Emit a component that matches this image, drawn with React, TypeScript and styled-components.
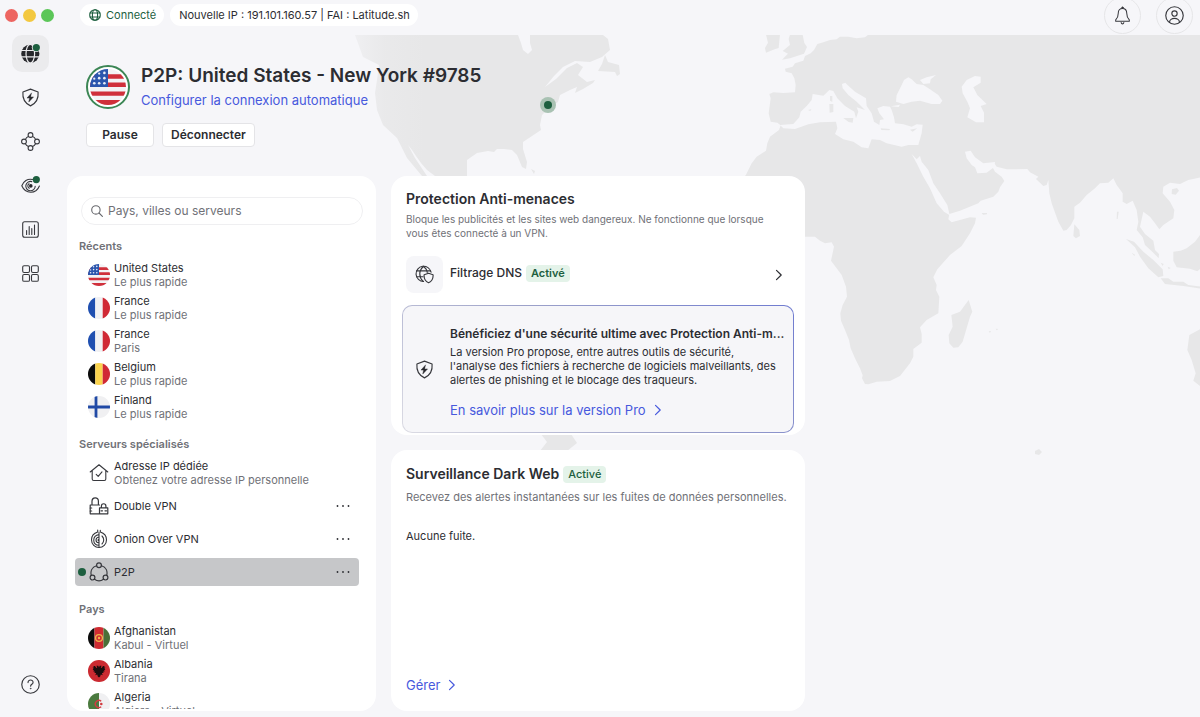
import React from "react";
import styled, { createGlobalStyle, css } from "styled-components";

const color = {
  page: "#f6f6f9",
  land: "#e7e7e8",
  ink: "#2c2d32",
  muted: "#707177",
  link: "#4759dd",
  green: "#1d5f3f",
  mint: "#e4f3e9",
};

const GlobalStyle = createGlobalStyle`
  *, *::before, *::after { box-sizing: border-box; }
  body {
    margin: 0;
    background: ${color.page};
    color: ${color.ink};
    font-family: Inter, "Liberation Sans", sans-serif;
    font-size: 11px;
    line-height: 14px;
  }
  h1, h2, h3, p, ul { margin: 0; padding: 0; }
  ul { list-style: none; }
  button, input { font: inherit; color: inherit; }
  button { border: 0; padding: 0; background: none; cursor: pointer; }
  a { color: ${color.link}; text-decoration: none; }
  svg { display: block; flex: none; }
`;

/* ---------- Shell ---------- */

const Shell = styled.div`
  display: flex;
  flex-direction: column;
  height: 100vh;
  overflow: hidden;
`;

const TitleBar = styled.header`
  display: flex;
  align-items: center;
  height: 30px;
  flex: none;
  padding: 0 7px 0 5px;
`;

const Lights = styled.div`
  display: flex;
  gap: 5px;
  width: 75px;
`;

const Light = styled.span<{ $fill: string }>`
  width: 13px;
  height: 13px;
  border-radius: 50%;
  background: ${(p) => p.$fill};
`;

const Pill = styled.span<{ $tone?: string }>`
  display: flex;
  align-items: center;
  gap: 5px;
  height: 22px;
  padding: 0 8px 0 9px;
  margin-right: 6px;
  border-radius: 11px;
  background: #fff;
  color: ${(p) => p.$tone || color.ink};
  white-space: nowrap;
`;

const Actions = styled.div`
  display: flex;
  gap: 15px;
  margin-left: auto;
`;

const RoundButton = styled.button`
  display: grid;
  place-items: center;
  width: 37px;
  height: 37px;
  border: 1px solid #e6e6e8;
  border-radius: 50%;
`;

const Body = styled.div`
  display: flex;
  flex: 1;
  min-height: 0;
`;

const Sidebar = styled.nav`
  display: flex;
  flex-direction: column;
  justify-content: space-between;
  width: 67px;
  flex: none;
  padding: 5px 0 14px 12px;
`;

const NavGroup = styled.div`
  display: flex;
  flex-direction: column;
  gap: 7px;
`;

const NavButton = styled.button<{ $active?: boolean }>`
  display: grid;
  place-items: center;
  width: 37px;
  height: 37px;
  border-radius: 10px;
  background: ${(p) => (p.$active ? "#ebebed" : "transparent")};
`;

const Stage = styled.div`
  display: grid;
  grid-template: minmax(0, 1fr) / minmax(0, 1fr);
  flex: 1;
  min-width: 0;
  padding-top: 5px;
  > * { grid-area: 1 / 1; }
`;

const MapSvg = styled.svg`
  width: 100%;
  height: 100%;
`;

const Content = styled.main`
  display: flex;
  flex-direction: column;
  min-height: 0;
  padding-bottom: 6px;
`;

/* ---------- Connection summary ---------- */

const Hero = styled.section`
  display: flex;
  flex-direction: column;
  gap: 14px;
  flex: none;
  height: 141px;
  padding: 29px 0 0 19px;
`;

const HeroTop = styled.div`
  display: flex;
  align-items: center;
  gap: 11px;
`;

const HeroText = styled.div`
  display: flex;
  flex-direction: column;
  align-items: flex-start;
  gap: 3px;
`;

const FlagRing = styled.span`
  display: grid;
  place-items: center;
  width: 44px;
  height: 44px;
  border: 2px solid #3c8655;
  border-radius: 50%;
  background: #fff;
`;

const HeroTitle = styled.h1`
  font-size: 19px;
  line-height: 24px;
  font-weight: 600;
`;

const TextLink = styled.a`
  display: inline-flex;
  align-items: center;
  gap: 8px;
  font-size: 13px;
  line-height: 18px;
`;

const HeroButtons = styled.div`
  display: flex;
  gap: 8px;
`;

const HeroButton = styled.button`
  height: 24px;
  min-width: 68px;
  padding: 0 8px;
  border: 1px solid #e4e4e7;
  border-radius: 4px;
  background: #fff;
  font-size: 12px;
  font-weight: 600;
`;

/* ---------- Panels ---------- */

const Columns = styled.div`
  display: grid;
  grid-template-columns: 309px 414px;
  gap: 15px;
  flex: 1;
  min-height: 0;
`;

const Panel = styled.section`
  background: #fff;
  border-radius: 16px;
`;

const ServerPanel = styled(Panel)`
  display: flex;
  flex-direction: column;
  min-height: 0;
  padding: 21px 0 2px;
  overflow: hidden;
`;

const SearchBox = styled.label`
  display: flex;
  align-items: center;
  gap: 5px;
  flex: none;
  height: 28px;
  margin: 0 13px 13px 14px;
  padding: 0 9px;
  border: 1px solid #efeff1;
  border-radius: 14px;
`;

const SearchInput = styled.input`
  flex: 1;
  min-width: 0;
  padding: 0;
  border: 0;
  outline: 0;
  background: transparent;
  font-size: 12px;
  &::placeholder { color: ${color.muted}; opacity: 1; }
`;

const ServerScroll = styled.div`
  flex: 1;
  min-height: 0;
  overflow: hidden;
  padding: 0 17px 0 8px;
`;

const Group = styled.section`
  & + & { margin-top: 15px; }
`;

const GroupTitle = styled.h2`
  padding-left: 4px;
  margin-bottom: 7px;
  color: ${color.muted};
  font-size: 11px;
  line-height: 16px;
  font-weight: 600;
`;

const GroupList = styled.ul`
  display: flex;
  flex-direction: column;
  gap: 5px;
`;

const Row = styled.li<{ $selected?: boolean }>`
  display: flex;
  align-items: center;
  height: 28px;
  padding: 0 6px 0 3px;
  border-radius: 4px;
  background: ${(p) => (p.$selected ? "#c6c7c9" : "transparent")};
`;

const RowDot = styled.span<{ $on?: boolean }>`
  width: 8px;
  height: 8px;
  margin-right: 2px;
  border-radius: 50%;
  background: ${(p) => (p.$on ? color.green : "transparent")};
`;

const RowButton = styled.button`
  display: flex;
  align-items: center;
  gap: 4px;
  flex: 1;
  text-align: left;
`;

const RowIcon = styled.span`
  display: grid;
  place-items: center;
  width: 22px;
  height: 22px;
`;

const RowText = styled.span`
  display: flex;
  flex-direction: column;
`;

const Muted = styled.span`
  color: ${color.muted};
`;

const MoreButton = styled.button`
  display: grid;
  place-items: center;
  width: 20px;
  height: 20px;
`;

const RightColumn = styled.div`
  display: flex;
  flex-direction: column;
  gap: 15px;
  min-height: 0;
`;

const ThreatPanel = styled(Panel)`
  padding: 14px 11px 2px;
`;

const DarkWebPanel = styled(Panel)`
  display: flex;
  flex-direction: column;
  flex: 1;
  min-height: 0;
  padding: 15px 15px 17px;
`;

const PanelTitle = styled.h2`
  display: flex;
  align-items: center;
  gap: 4px;
  font-size: 14px;
  line-height: 18px;
  font-weight: 600;
`;

const ThreatIntro = styled.div`
  padding: 0 4px;
  p { margin-top: 4px; color: ${color.muted}; max-width: 376px; font-size: 10px; }
`;

const Badge = styled.span<{ $light?: boolean }>`
  height: 17px;
  padding: 0 5px;
  border-radius: 4px;
  background: ${color.mint};
  color: ${color.green};
  font-size: 11px;
  line-height: 17px;
  font-weight: ${(p) => (p.$light ? 500 : 600)};
`;

const FilterRow = styled.button`
  display: flex;
  align-items: center;
  width: 100%;
  margin-top: 16px;
  padding: 0 11px 0 4px;
  font-size: 12px;
  font-weight: 500;
  > svg { margin-left: auto; }
`;

const FilterTile = styled.span`
  display: grid;
  place-items: center;
  width: 37px;
  height: 37px;
  margin-right: 7px;
  border-radius: 8px;
  background: ${color.page};
`;

const FilterLabel = styled.span`
  display: flex;
  align-items: center;
  gap: 4px;
  padding-bottom: 3px;
`;

const Promo = styled.section`
  display: flex;
  align-items: center;
  margin-top: 12px;
  padding: 0 12px;
  gap: 16px;
  border: 1px solid transparent;
  border-radius: 10px;
  background:
    linear-gradient(${color.page}, ${color.page}) padding-box,
    linear-gradient(40deg, #dcdce4, #9da2c9 50%, #6f7bd0) border-box;
`;

const PromoText = styled.div`
  flex: 1;
  min-width: 0;
  padding: 19px 0 13px;
  h3 {
    font-size: 12px;
    line-height: 18px;
    font-weight: 600;
    white-space: nowrap;
  }
  p { margin: 2px 0 14px; }
`;

const DarkWebNote = styled.p<{ $muted?: boolean }>`
  ${(p) =>
    p.$muted
      ? css`
          margin-top: 7px;
          color: ${color.muted};
        `
      : css`
          margin-top: 25px;
        `}
`;

const PanelFooter = styled.div`
  display: flex;
  margin-top: auto;
`;

/* ---------- Icons ---------- */

const line = {
  fill: "none",
  stroke: "#37383d",
  strokeWidth: 1.1,
  strokeLinecap: "round" as const,
  strokeLinejoin: "round" as const,
};

const BOLT = "M10.900 5.400 6.300 10.600h2.700l-.8 4.200 5-5.400h-2.900z";
const SHIELD = "M10 1.200 18 4.200c.5 5.600-1.500 11.600-8 14.600C3.500 15.800 1.500 9.800 2 4.200z";

const GlobeSolidIcon = () => (
  <svg width="19" height="19" viewBox="0 0 19 19">
    <circle cx="9.300" cy="9.700" r="9.100" fill="#26272b" />
    <g fill="none" stroke="#ebebed" strokeWidth="1.200">
      <ellipse cx="9.300" cy="9.700" rx="4.300" ry="9.400" />
      <path d="M0 6.500h19M0 12.900h19" />
    </g>
    <circle cx="15.300" cy="3.600" r="4.500" fill="#ebebed" />
    <circle cx="15.300" cy="3.600" r="3.600" fill={color.green} />
  </svg>
);

const ShieldBoltIcon = () => (
  <svg width="19" height="19" viewBox="0 0 20 20" {...line}>
    <path d={SHIELD} strokeWidth="1.200" />
    <path d={BOLT} fill="#26272b" strokeWidth=".5" />
  </svg>
);

const MeshIcon = () => (
  <svg width="19" height="19" viewBox="0 0 19 19" {...line}>
    <circle cx="9.500" cy="9.500" r="5.500" />
    <g fill={color.page}>
      <circle cx="9.500" cy="3" r="2.400" />
      <circle cx="9.500" cy="16" r="2.400" />
      <circle cx="3" cy="9.500" r="2.400" />
      <circle cx="16" cy="9.500" r="2.400" />
    </g>
  </svg>
);

const EyeIcon = () => (
  <svg width="19" height="19" viewBox="0 0 19 19" {...line}>
    <path d="M11.500 3.500C6.500 2.300 2.400 5.500.8 9.800c3.700 8.600 14.200 8.600 17.600.2" />
    <path d="M10.800 5.600a4.700 4.700 0 1 0 3.400 4.600" />
    <path d="M8 7.700a2.700 2.700 0 0 0 .2 4.600" />
    <circle cx="9.800" cy="9.900" r="1.800" fill="#26272b" stroke="none" />
    <circle cx="15.300" cy="3.600" r="3.600" fill={color.green} stroke="none" />
  </svg>
);

const ChartIcon = () => (
  <svg width="17" height="17" viewBox="0 0 17 17" {...line}>
    <rect x=".7" y=".7" width="15.600" height="15.600" rx="2" />
    <path d="M4.600 9.500v4M7.200 5.500v8M9.800 7.500v6M12.500 4v9.500" />
  </svg>
);

const GridIcon = () => (
  <svg width="17" height="17" viewBox="0 0 17 17" {...line}>
    <rect x=".7" y=".7" width="6.800" height="6.800" rx="1.400" />
    <rect x="9.500" y=".7" width="6.800" height="6.800" rx="1.400" />
    <rect x=".7" y="9.500" width="6.800" height="6.800" rx="1.400" />
    <rect x="9.500" y="9.500" width="6.800" height="6.800" rx="1.400" />
  </svg>
);

const HelpIcon = () => (
  <svg width="19" height="19" viewBox="0 0 20 20" {...line} strokeWidth="1.200">
    <circle cx="10" cy="10" r="9.200" />
    <path d="M7.400 8c0-3.800 5.400-3.500 5.300-.2-.1 1.900-2.500 2-2.600 3.900" />
    <circle cx="10.100" cy="14.300" r=".5" fill="#37383d" strokeWidth=".5" />
  </svg>
);

const BellIcon = () => (
  <svg width="17" height="19" viewBox="0 0 18 20" {...line}>
    <path d="M9 2.600c-3 0-4.500 2-4.500 4.900 0 4-1 5.500-2.700 7.200v1.400h14.400v-1.400c-1.700-1.700-2.700-3.200-2.700-7.200 0-2.900-1.500-4.900-4.500-4.900z" />
    <circle cx="9" cy="1.700" r=".9" fill="#37383d" strokeWidth=".6" />
    <path d="M7.600 17.500c.3 1.800 2.500 1.800 2.800 0" />
  </svg>
);

const UserIcon = () => (
  <svg width="19" height="19" viewBox="0 0 20 20" {...line} strokeWidth="1.200">
    <circle cx="10" cy="10" r="9.200" />
    <circle cx="10" cy="8" r="2.800" />
    <path d="M4.800 17.200c-.3-5.600 10.700-5.600 10.400 0" />
  </svg>
);

const GlobeIcon = () => (
  <svg width="12" height="12" viewBox="0 0 12 12" {...line} stroke={color.green}>
    <circle cx="6" cy="6" r="5.300" />
    <ellipse cx="6" cy="6" rx="2.600" ry="5.300" />
    <path d="M1 4h10M1 8h10" />
  </svg>
);

const SearchIcon = () => (
  <svg width="12" height="12" viewBox="0 0 12 12" {...line} stroke="#66676c">
    <circle cx="4.900" cy="4.900" r="4.200" />
    <path d="m8 8 3.400 3.400" />
  </svg>
);

const GlobeShieldIcon = () => (
  <svg width="19" height="19" viewBox="0 0 20 20" {...line} strokeWidth="1.200">
    <path d="M9 17.300A8 8 0 1 1 16.900 7.600" />
    <path d="M8.500 17.300C3.800 12.500 3.800 6 9 1.300c2.200 1.900 3.600 4 3.900 6.400M1.600 6.200h14.800M1.600 12.400h6.900" />
    <path d="M14.300 8.700 19 10.300c.3 3.800-1 6.900-4.700 8.400-3.700-1.500-5-4.600-4.700-8.400z" />
  </svg>
);

const Chevron = () => (
  <svg width="8" height="12" viewBox="0 0 8 12" {...line} stroke="currentColor" strokeWidth="1.200">
    <path d="m1.500 1.300 4.700 4.700-4.700 4.700" />
  </svg>
);

const MoreIcon = () => (
  <svg width="14" height="4" viewBox="0 0 14 4" fill="currentColor">
    <circle cx="1.500" cy="2" r=".9" />
    <circle cx="7" cy="2" r=".9" />
    <circle cx="12.500" cy="2" r=".9" />
  </svg>
);

const HouseIcon = () => (
  <svg width="20" height="20" viewBox="0 0 20 20" {...line}>
    <path d="M1.200 9 10 1.800 18.800 9M3.200 7.600V16c0 1 .5 1.500 1.500 1.500h10.600c1 0 1.500-.5 1.500-1.500V7.600" />
    <path d="m7.200 11.400 2 2 3.800-4.600" />
  </svg>
);

const LocksIcon = () => (
  <svg width="20" height="18" viewBox="0 0 20 18" {...line} strokeWidth="1.200">
    <path d="M10.500 8H1.200v8.800h9.300M3 8V4.300c0-4.500 6.400-4.500 6.400 0V8M10.500 10.800v6h8.300v-6zM12.400 10.800V9c0-3 4.500-3 4.500 0v1.800" />
    <path d="M1.200 11h1.500M1.200 14h1.500M12 13.800h1.500M16 13.800h1.500" />
  </svg>
);

const OnionIcon = () => (
  <svg width="18" height="20" viewBox="0 0 18 20" {...line}>
    <path d="M7.700 1v2C3.600 4.300 1.500 7 1.500 10.700c0 4.500 3.400 7.800 7.500 7.800s7.500-3.300 7.500-7.800C16.500 7 14.400 4.300 10.300 3V1.200" />
    <path d="M9 3.200v15.300M9 5.600c-7 1-7 10.200 0 10.600M9 8c-4 .6-4 5.600 0 6M9 10.300c-1.300.2-1.300 1.400 0 1.600M12 7c2.300 2.200 2.300 5.600 0 8" />
  </svg>
);

const PeersIcon = () => (
  <svg width="20" height="20" viewBox="0 0 20 20" {...line} strokeWidth="1.200">
    <circle cx="10" cy="3.200" r="2.400" />
    <circle cx="3.500" cy="15.600" r="2.400" />
    <circle cx="16.500" cy="15.600" r="2.400" />
    <path d="M7.500 3.800C3 5.300 1.200 9.200 2.300 13.400M12.500 3.800c4.500 1.500 6.300 5.400 5.200 9.600M5.500 17.200c2.700 2 6.300 2 9 0" />
  </svg>
);

/* ---------- Flags ---------- */

type FlagCode = "us" | "fr" | "be" | "fi" | "af" | "al" | "dz";

const flagArt: Record<FlagCode, React.ReactNode> = {
  us: (
    <>
      <path fill="#f3f3f5" d="M0 0h22v22H0z" />
      <path fill="#d0303b" d="M0 3.200h22v2.700H0zM0 8.300h22v2.700H0zM0 13.700h22v2.600H0zM0 19h22v3H0z" />
      <path fill="#2b56ad" d="M0 0h11v11H0z" />
      <g fill="#e8edf7">
        <circle cx="8.800" cy="2.400" r=".8" />
        <circle cx="5.600" cy="2.800" r=".7" />
        <circle cx="5.600" cy="5.600" r=".8" />
        <circle cx="8.800" cy="5.600" r=".8" />
        <circle cx="2.600" cy="5.900" r=".7" />
        <circle cx="2.600" cy="8.700" r=".8" />
        <circle cx="5.600" cy="8.700" r=".8" />
        <circle cx="8.800" cy="8.700" r=".8" />
      </g>
    </>
  ),
  fr: (
    <>
      <path fill="#1f4fb0" d="M0 0h7.300v22H0z" />
      <path fill="#f1f1f3" d="M7.300 0h7.400v22H7.300z" />
      <path fill="#d02935" d="M14.700 0H22v22h-7.300z" />
    </>
  ),
  be: (
    <>
      <path fill="#0b0b0b" d="M0 0h7.300v22H0z" />
      <path fill="#fbd34e" d="M7.300 0h7.400v22H7.300z" />
      <path fill="#d02935" d="M14.700 0H22v22h-7.300z" />
    </>
  ),
  fi: (
    <>
      <path fill="#f0f0f2" d="M0 0h22v22H0z" />
      <path fill="#2049a5" d="M0 9.600h6.600V0h2.800v9.600H22v2.800H9.400V22H6.600v-9.600H0z" />
    </>
  ),
  af: (
    <>
      <path fill="#0b0b0b" d="M0 0h6.500v22H0z" />
      <path fill="#cf2b31" d="M6.500 0h9v22h-9z" />
      <path fill="#4b7038" d="M15.500 0H22v22h-6.500z" />
      <circle cx="11" cy="11" r="3.400" fill="none" stroke="#f0b44a" strokeWidth="1.300" />
      <circle cx="11" cy="11" r="1.200" fill="#f0b44a" />
    </>
  ),
  al: (
    <>
      <path fill="#cb2a31" d="M0 0h22v22H0z" />
      <path
        fill="#1a0c0d"
        d="m11 7.600.7-1.800 1.900-.1-.8 1.700.8.600L15 6l1.600.1-.5 1.200 1.300.4-1 1.100 1 .8-1.300.7.600 1.200-1.500.1.300 1.500-1.600-.2.800 2.300-1.900-.7-.6 2.100-1.200 1-1.200-1-.6-2.100-1.900.7.800-2.300-1.600.2.300-1.500-1.500-.1.600-1.200-1.300-.7 1-.8-1-1.100 1.300-.4-.5-1.200L7 6l1.400 2 .8-.6-.8-1.700 1.900.1z"
      />
    </>
  ),
  dz: (
    <>
      <path fill="#4b7a3f" d="M0 0h11v22H0z" />
      <path fill="#f0f0f2" d="M11 0h11v22H11z" />
      <path fill="none" stroke="#d33b40" strokeWidth="1.400" d="M13.200 8.200a3.600 3.600 0 1 0 0 5.600" />
      <circle cx="13.300" cy="11" r="1.300" fill="#d33b40" />
    </>
  ),
};

const FlagSvg = styled.svg`
  border-radius: 50%;
`;

const Flag = ({ code, size = 22 }: { code: FlagCode; size?: number }) => (
  <FlagSvg width={size} height={size} viewBox="0 0 22 22" aria-hidden>
    {flagArt[code]}
  </FlagSvg>
);

/* ---------- World map ---------- */

const WorldMap = () => (
  <MapSvg viewBox="67 35 1133 682" preserveAspectRatio="xMinYMin slice" aria-hidden>
    <defs>
      <linearGradient id="fade" gradientUnits="userSpaceOnUse" x1="335" y1="0" x2="425" y2="0">
        <stop offset="0" stopColor={color.land} stopOpacity=".2" />
        <stop offset=".55" stopColor={color.land} stopOpacity=".85" />
        <stop offset="1" stopColor={color.land} />
      </linearGradient>
    </defs>
    <path
      fill="url(#fade)"
      d="M355 35L518 35L521 43L523 50L528 54L532 50L530 43L530 35L603 35L608 39L610 50L602 57L590 62L575 61L563 67L554 76L545 87L556 79L567 68L577 63L583 67L578 75L587 82L595 80L593 83L583 89L575 93L577 87L570 90L560 95L558 102L548 109L542 115L540 125L541 130L523 142L523 149L527 162L526 169L522 167L517 155L512 150L504 149L497 149L494 152L488 151L477 153L467 160L467 180L435 176L427 170L421 163L416 156L412 150L408 145L415 158L421 167L427 176L422 176L407 158L397 138L383 125L377 110L375 93L377 80L379 65L363 57Z"
    />
    <g fill={color.land}>
      <path d="M605 55l3 7 11 3 1 9-3 2-2-4-17-1 4-7zM541 434H571L577 443L567 451L540 451L547 442Z" />
      <path d="M531 169l4 2-1 3zM1035 451l4-2 3 3-3 3-4-1z" />
      <g transform="translate(740 30) scale(.333333)">
        <path d="M1400 14L385 14L375 22L350 25L325 20L300 20L290 28L270 30L250 37L232 42L222 60L212 70L195 78L190 92L165 100L158 110L135 116L137 125L155 130L163 145L167 165L165 187L130 189L100 187L88 192L92 205L86 250L92 275L112 278L122 286L117 300L90 320L82 340L78 362L50 380L35 400L18 434L-60 530L-60 600L195 620L225 620L240 632L255 640L275 637L282 650L273 692L290 715L305 735L318 770L321 800L308 825L301 850L303 872L315 900L327 930L332 955L345 985L360 1015L368 1036L366 1045L375 1062L385 1063L410 1055L450 1053L480 1038L510 1000L520 980L520 957L545 938L545 912L540 892L560 870L595 850L598 800L588 780L590 765L580 742L592 718L630 675L665 648L690 610L705 580L708 563L690 562L635 577L625 568L628 552L660 542L715 520L722 512L760 500L775 485L780 472L793 453L785 440L765 425L757 410L762 398L770 410L800 418L862 417L870 427L895 440L888 447L910 468L920 465L925 450L928 490L935 520L955 575L970 602L980 600L993 585L1003 565L1003 530L1020 518L1040 495L1065 475L1080 460L1105 458L1120 445L1130 465L1148 490L1148 515L1160 522L1178 512L1190 540L1195 575L1190 600L1208 622L1215 645L1240 668L1256 685L1257 672L1245 660L1240 632L1215 612L1200 590L1210 545L1230 560L1245 580L1258 598L1270 585L1300 565L1303 540L1290 515L1268 490L1270 470L1290 458L1320 462L1345 450L1400 438Z" />
        <path d="M78 14h42l-4 40-12 4-26 10-3-14 9-16zM150 14h38l5 25 8 12-9 20-42 14-24 4 18-18-16-8 22-18-4-18z" />
        <path d="M686 810L697 845L690 860L668 935L655 952L640 953L628 940L626 915L638 890L634 855L660 845ZM1003 583L1018 600L1020 618L1008 625L1000 618Z" />
        <path d="M1158 627L1182 635L1210 665L1240 690L1268 718L1270 738L1255 742L1225 715L1200 680L1185 652ZM1400 600L1380 615L1365 635L1340 655L1322 662L1300 665L1300 692L1310 712L1350 716L1372 724L1400 700Z" />
        <path d="M1262 745L1285 745L1300 755L1330 755L1345 765L1400 772V778L1330 768L1275 762ZM1296 478l15-4 6 8-10 12-12-2zM1400 890L1380 898L1348 915L1342 960L1355 990L1367 1030L1360 1052L1380 1068L1400 1060Z" />
        <path d="M725 549l16 0v4l-12 1zM746 904l7-1-3 6zM767 896l8 1-5 4zM1131 545h5l-3 22h-3zM1175 668l10 6-2 4zM1262 698l9 4-3 6zM1283 710l9 4-6 4z" />
      </g>
    </g>
    <g fill={color.page} transform="translate(740 30) scale(.333333)">
      <path d="M120 285L160 282L178 262L182 245L200 228L215 210L218 192L250 197L268 180L280 183L292 205L315 228L343 245L348 265L355 245L350 232L375 240L350 215L325 195L308 175L306 162L316 158L325 167L345 185L378 205L380 228L395 250L402 275L418 285L420 270L432 268L418 250L412 235L430 228L450 230L455 240L462 262L465 280L490 283L515 290L530 283L548 284L545 310L535 345L505 345L485 350L440 340L420 330L395 328L385 355L365 352L340 335L310 328L285 312L292 295L288 275L240 277L205 283L165 297L130 295Z" />
      <path d="M505 142L515 148L530 162L550 165L570 178L595 195L607 212L600 222L575 222L540 212L515 215L490 222L468 215L470 195L485 165L492 150ZM540 150L560 142L588 135L572 148L570 160L550 162ZM453 229L480 224L476 231Z" />
      <path d="M665 170L680 150L705 138L722 140L722 158L700 172L712 195L722 205L740 222L722 228L732 248L732 277L708 277L682 262L690 235L682 215L668 190Z" />
      <path d="M515 372L530 388L540 378L545 395L565 420L580 460L600 490L622 525L629 556L612 545L590 520L570 475L550 440L530 400ZM675 365L692 362L705 382L730 400L765 396L762 412L740 428L712 430L705 412L695 405L680 385Z" />
    </g>
    <g fill={color.land} transform="translate(740 30) scale(.333333)">
      <path d="M270 198h7v18l-7-4zM268 222h12v24l-11 2zM310 264l30 0-2 14-12-2zM422 295l28 2-2 4-24-1zM510 299l22-4-14 10zM204 240l10-2-3 5z" />
    </g>
    <circle cx="548" cy="105" r="8" fill="#a9c2b3" />
    <circle cx="548" cy="105" r="4" fill={color.green} />
  </MapSvg>
);

/* ---------- Server list ---------- */

type Server = {
  name: string;
  detail?: string;
  flag?: FlagCode;
  icon?: React.ReactNode;
  more?: boolean;
  selected?: boolean;
};

const groups: { title: string; servers: Server[] }[] = [
  {
    title: "Récents",
    servers: [
      { name: "United States", detail: "Le plus rapide", flag: "us" },
      { name: "France", detail: "Le plus rapide", flag: "fr" },
      { name: "France", detail: "Paris", flag: "fr" },
      { name: "Belgium", detail: "Le plus rapide", flag: "be" },
      { name: "Finland", detail: "Le plus rapide", flag: "fi" },
    ],
  },
  {
    title: "Serveurs spécialisés",
    servers: [
      { name: "Adresse IP dédiée", detail: "Obtenez votre adresse IP personnelle", icon: <HouseIcon /> },
      { name: "Double VPN", icon: <LocksIcon />, more: true },
      { name: "Onion Over VPN", icon: <OnionIcon />, more: true },
      { name: "P2P", icon: <PeersIcon />, more: true, selected: true },
    ],
  },
  {
    title: "Pays",
    servers: [
      { name: "Afghanistan", detail: "Kabul - Virtuel", flag: "af" },
      { name: "Albania", detail: "Tirana", flag: "al" },
      { name: "Algeria", detail: "Algiers - Virtuel", flag: "dz" },
    ],
  },
];

const ServerRow = ({ server }: { server: Server }) => (
  <Row $selected={server.selected}>
    <RowDot $on={server.selected} />
    <RowButton type="button">
      <RowIcon>{server.flag ? <Flag code={server.flag} /> : server.icon}</RowIcon>
      <RowText>
        <span>{server.name}</span>
        {server.detail && <Muted>{server.detail}</Muted>}
      </RowText>
    </RowButton>
    {server.more && (
      <MoreButton type="button" aria-label={`Options ${server.name}`}>
        <MoreIcon />
      </MoreButton>
    )}
  </Row>
);

const navItems = [
  { label: "VPN", icon: <GlobeSolidIcon />, active: true },
  { label: "Protection", icon: <ShieldBoltIcon /> },
  { label: "Meshnet", icon: <MeshIcon /> },
  { label: "Surveillance", icon: <EyeIcon /> },
  { label: "Statistiques", icon: <ChartIcon /> },
  { label: "Applications", icon: <GridIcon /> },
];

export default function App() {
  return (
    <Shell>
      <GlobalStyle />
      <TitleBar>
        <Lights>
          <Light $fill="#ed6561" />
          <Light $fill="#f3c83f" />
          <Light $fill="#5bc658" />
        </Lights>
        <Pill $tone={color.green}>
          <GlobeIcon />
          Connecté
        </Pill>
        <Pill>Nouvelle IP : 191.101.160.57 | FAI : Latitude.sh</Pill>
        <Actions>
          <RoundButton type="button" aria-label="Notifications">
            <BellIcon />
          </RoundButton>
          <RoundButton type="button" aria-label="Compte">
            <UserIcon />
          </RoundButton>
        </Actions>
      </TitleBar>
      <Body>
        <Sidebar>
          <NavGroup>
            {navItems.map((item) => (
              <NavButton key={item.label} type="button" aria-label={item.label} $active={item.active}>
                {item.icon}
              </NavButton>
            ))}
          </NavGroup>
          <NavButton type="button" aria-label="Aide">
            <HelpIcon />
          </NavButton>
        </Sidebar>
        <Stage>
          <WorldMap />
          <Content>
            <Hero>
              <HeroTop>
                <FlagRing>
                  <Flag code="us" size={36} />
                </FlagRing>
                <HeroText>
                  <HeroTitle>P2P: United States - New York #9785</HeroTitle>
                  <TextLink href="#auto">Configurer la connexion automatique</TextLink>
                </HeroText>
              </HeroTop>
              <HeroButtons>
                <HeroButton type="button">Pause</HeroButton>
                <HeroButton type="button">Déconnecter</HeroButton>
              </HeroButtons>
            </Hero>
            <Columns>
              <ServerPanel>
                <SearchBox>
                  <SearchIcon />
                  <SearchInput
                    type="search"
                    aria-label="Rechercher"
                    placeholder="Pays, villes ou serveurs"
                  />
                </SearchBox>
                <ServerScroll>
                  {groups.map((group) => (
                    <Group key={group.title}>
                      <GroupTitle>{group.title}</GroupTitle>
                      <GroupList>
                        {group.servers.map((server, i) => (
                          <ServerRow key={i} server={server} />
                        ))}
                      </GroupList>
                    </Group>
                  ))}
                </ServerScroll>
              </ServerPanel>
              <RightColumn>
                <ThreatPanel>
                  <ThreatIntro>
                    <PanelTitle>Protection Anti-menaces</PanelTitle>
                    <p>
                      Bloque les publicités et les sites web dangereux. Ne fonctionne que lorsque
                      vous êtes connecté à un VPN.
                    </p>
                  </ThreatIntro>
                  <FilterRow type="button">
                    <FilterTile>
                      <GlobeShieldIcon />
                    </FilterTile>
                    <FilterLabel>
                      Filtrage DNS <Badge>Activé</Badge>
                    </FilterLabel>
                    <Chevron />
                  </FilterRow>
                  <Promo>
                    <ShieldBoltIcon />
                    <PromoText>
                      <h3>Bénéficiez d'une sécurité ultime avec Protection Anti-m...</h3>
                      <p>
                        La version Pro propose, entre autres outils de sécurité, l'analyse des
                        fichiers à recherche de logiciels malveillants, des alertes de phishing et
                        le blocage des traqueurs.
                      </p>
                      <TextLink href="#pro">
                        En savoir plus sur la version Pro <Chevron />
                      </TextLink>
                    </PromoText>
                  </Promo>
                </ThreatPanel>
                <DarkWebPanel>
                  <PanelTitle>
                    Surveillance Dark Web <Badge $light>Activé</Badge>
                  </PanelTitle>
                  <DarkWebNote $muted>
                    Recevez des alertes instantanées sur les fuites de données personnelles.
                  </DarkWebNote>
                  <DarkWebNote>Aucune fuite.</DarkWebNote>
                  <PanelFooter>
                    <TextLink href="#manage">
                      Gérer <Chevron />
                    </TextLink>
                  </PanelFooter>
                </DarkWebPanel>
              </RightColumn>
            </Columns>
          </Content>
        </Stage>
      </Body>
    </Shell>
  );
}
